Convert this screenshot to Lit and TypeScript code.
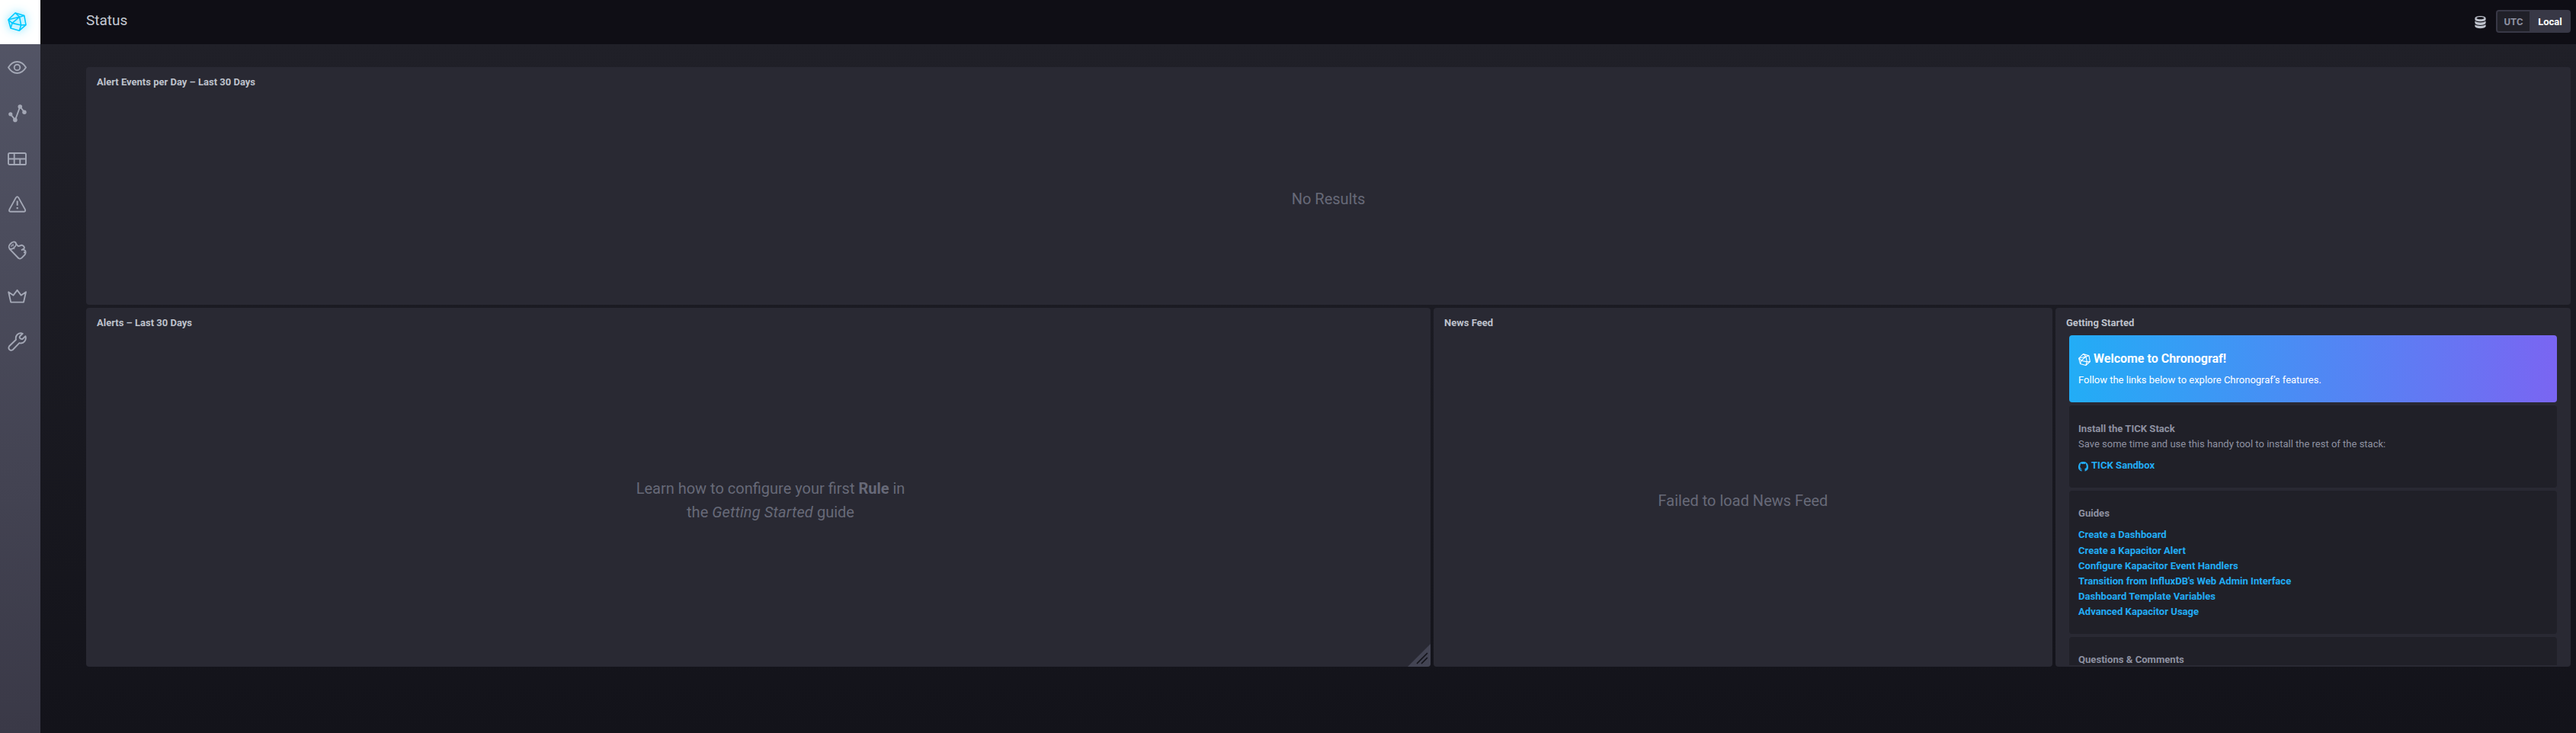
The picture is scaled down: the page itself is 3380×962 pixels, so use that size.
import { LitElement, html, css, svg } from "lit";
import { customElement } from "lit/decorators.js";

const cubo = svg`
  <path d="M10 1 L21.8 4.4 L24 16.6 L15.4 24.2 L4 21 L1 9.8 Z"/>
  <path d="M10 1 L15.6 6.2 L21.8 4.4 M15.6 6.2 L1 9.8 M15.6 6.2 L17.6 17 L24 16.6 M1 9.8 L6 14.4 L15.6 6.2 M6 14.4 L4 21 M6 14.4 L17.6 17 L15.4 24.2"/>`;

const icons = {
  eye: svg`<path d="M1 12.5 C4 7.5 8 5 12.5 5 S21 7.5 24 12.5 C21 17.5 17 20 12.5 20 S4 17.5 1 12.5 Z"/><circle cx="12.5" cy="12.5" r="3.8"/>`,
  graph: svg`<path d="M3.8 13.8 L10 21.4 L16.3 4 L22 11.2"/><g class="dot"><circle cx="3.8" cy="13.8" r="2.6"/><circle cx="9.9" cy="21.4" r="2.8"/><circle cx="16.3" cy="4" r="2.8"/><circle cx="22" cy="11.2" r="2.7"/></g>`,
  dash: svg`<rect x="1" y="5" width="23" height="15" rx="1.6"/><path d="M1 12.5 H24 M8.7 5 V20 M16.3 12.5 V20"/>`,
  alert: svg`<path d="M10.9 3.4 Q12.6 0.8 14.3 3.4 L22.8 18.6 Q24 21.7 21.6 21.8 H3.7 Q1.2 21.7 2.5 18.6 Z"/><path class="mark" d="M12.7 7.6 V13.8 M12.7 15.9 V18.2"/>`,
  log: svg`<path d="M2.2 10.4 L14.4 23 Q16.5 24.4 18.6 22.4 L22.5 18.4 Q24.6 15.5 22.8 12.6 Q20.6 12 20.6 10.8 Q23 9.6 21 7.2 Q18.8 4.8 16.6 6.4 Q13.6 7.8 12.6 5.8 L10 2.2 M18 12.4 L20.6 10.8 M21 15.2 L22.6 15.2"/><ellipse cx="6.4" cy="6.2" rx="5.6" ry="3.5" transform="rotate(-45 6.4 6.2)"/><path d="M4.8 8.2 Q4.4 5.8 8 4.6 M6.5 7.2 L7.8 6 M8 9.7 L9.2 10.8" stroke-width="1.1"/>`,
  crown: svg`<path d="M1.2 7.2 L4.2 20.6 H21 L24 7.2 L17.8 11.6 L12.6 4.8 L7.4 11.6 Z"/>`,
  wrench: svg`<path d="M19.8 1.8 Q16 0.4 12.8 3 Q10 5.8 11 9.8 L2.2 18.2 Q0.6 20.4 2.2 22.6 Q4.4 24.8 6.8 23 L15.4 14.2 Q19.6 15.2 22.2 12.2 Q24.8 9 23.4 5.2 L19.4 9 Q17 9.2 16 7.8 Q15.2 6 16.6 4.8 Z"/>`,
};

const guides = [
  "Create a Dashboard",
  "Create a Kapacitor Alert",
  "Configure Kapacitor Event Handlers",
  "Transition from InfluxDB's Web Admin Interface",
  "Dashboard Template Variables",
  "Advanced Kapacitor Usage",
];

@customElement("app-root")
export class AppRoot extends LitElement {
  static styles = css`
    :host {
      display: flex;
      height: 962px;
      overflow: hidden;
      font-family: Roboto, sans-serif;
      font-size: 13px;
      color: #bec2cc;
      background: #13131a;
    }
    * { box-sizing: border-box; }
    svg { display: block; fill: none; stroke: currentColor; stroke-width: 1.6; stroke-linejoin: round; }
    .nav {
      flex: 0 0 53px;
      display: flex;
      flex-direction: column;
      background: linear-gradient(#545667, #3a3947);
      color: #a4a8b6;
    }
    .logo {
      height: 58px;
      padding: 16px 0 0 10px;
      background: #fff;
      color: #00c9ff;
    }
    .logo svg { filter: drop-shadow(0 0 4px #9beaff) drop-shadow(0 0 7px #b4efff); }
    .item { height: 60px; padding: 18px 0 0 10px; }
    .item svg { stroke-width: 1.9; }
    .item .dot { fill: currentColor; stroke: none; }
    .item .mark { stroke-width: 2.1; }
    .page { flex: 1; display: flex; flex-direction: column; min-width: 0; }
    .head {
      flex: 0 0 58px;
      display: flex;
      align-items: center;
      padding: 0 7px 0 60px;
      background: #0f0e15;
    }
    .title { flex: 1; font-size: 19px; line-height: 24px; padding-bottom: 4px; color: #c6cad3; }
    .db { margin-right: 13px; }
    .db svg { fill: #bec2cc; stroke: none; }
    .toggle {
      display: flex;
      width: 98px;
      height: 30px;
      margin-top: -2px;
      padding: 2px;
      border-radius: 4px;
      background: #383846;
      font-weight: 700;
      line-height: 27px;
      text-align: center;
    }
    .utc { width: 42px; height: 26px; background: #202028; color: #8e91a1; border-radius: 2px 0 0 2px; }
    .local { flex: 1; padding-left: 2px; color: #fff; }
    .body {
      flex: 1;
      padding: 30px 7px 0 60px;
      background: linear-gradient(#202028, #13131a);
    }
    .grid {
      display: grid;
      grid-template-columns: 1764px 812px 676px;
      grid-template-rows: 312px 471px;
      gap: 4px;
    }
    .cell {
      position: relative;
      display: flex;
      flex-direction: column;
      overflow: hidden;
      border-radius: 4px;
      background: #292933;
    }
    .wide { grid-column: 1 / 4; }
    .name { flex: none; height: 36px; padding: 0 14px; line-height: 39px; font-weight: 700; }
    .empty {
      flex: 1;
      display: flex;
      flex-direction: column;
      align-items: center;
      justify-content: center;
      font-size: 20px;
      line-height: 31px;
      color: #676978;
      text-align: center;
    }
    .none { padding-bottom: 2px; }
    .learn { padding: 0 0 2px 32px; }
    .learn i { letter-spacing: 0.15px; }
    .grip { position: absolute; right: 0; bottom: 0; }
    .grip svg { stroke: #13131a; stroke-width: 1.7; stroke-linecap: round; }
    .grip .fill { fill: #434453; stroke: none; }
    .scroll {
      flex: 1;
      min-height: 0;
      display: flex;
      flex-direction: column;
      gap: 4px;
      margin: 0 18px 2px;
      overflow: hidden;
    }
    .card {
      flex: none;
      padding: 0 12px;
      border-radius: 4px;
      background: #202028;
      color: #8e91a1;
      line-height: 20px;
    }
    .hero {
      height: 88px;
      padding-top: 20px;
      color: #fff;
      background: linear-gradient(to right, #22adf6, #7a65f2);
    }
    .hero-title { display: flex; align-items: center; gap: 4px; font-size: 16px; font-weight: 700; line-height: 22px; }
    .hero-title svg { margin-top: 2px; stroke-width: 1.7; }
    .hero-text { padding-top: 7px; }
    .install { height: 108px; padding-top: 21px; }
    .guides { height: 188px; padding-top: 20px; }
    .ask { height: 108px; padding-top: 20px; }
    .h { font-size: 13.1px; font-weight: 700; }
    .link { display: block; color: #22adf6; font-size: 13.1px; font-weight: 700; }
    .sandbox { display: flex; align-items: center; gap: 4px; padding-top: 8px; }
    .sandbox svg { margin-top: 2px; fill: currentColor; stroke: none; }
    .list { padding-top: 8px; }
    .list .link:first-child { padding-bottom: 1px; }
  `;

  icon(name: keyof typeof icons) {
    return html`<div class="item"><svg width="25" height="25" viewBox="0 0 25 25">${icons[name]}</svg></div>`;
  }

  render() {
    return html`
      <nav class="nav">
        <div class="logo"><svg width="25" height="25" viewBox="0 0 25 25">${cubo}</svg></div>
        ${this.icon("eye")}${this.icon("graph")}${this.icon("dash")}${this.icon("alert")}
        ${this.icon("log")}${this.icon("crown")}${this.icon("wrench")}
      </nav>
      <main class="page">
        <header class="head">
          <div class="title">Status</div>
          <div class="db">
            <svg width="15" height="17" viewBox="0 0 15 17">
              <path fill-rule="evenodd" d="M7.5 0 C11.5 0 14.6 1.2 14.6 3 V4.6 Q14.6 7.2 7.5 7.3 Q0.4 7.2 0.4 4.6 V3 C0.4 1.2 3.5 0 7.5 0 Z M7.5 1.2 C4.6 1.2 2.4 1.8 2.4 2.7 S4.6 4.2 7.5 4.2 S12.6 3.6 12.6 2.7 S10.4 1.2 7.5 1.2 Z"/>
              <path d="M0.4 6.6 Q2.5 8.5 7.5 8.5 T14.6 6.6 V9.2 Q13.5 11.8 7.5 11.9 Q1.5 11.8 0.4 9.2 Z"/>
              <path d="M0.4 11.3 Q2.5 13 7.5 13 T14.6 11.3 V13.8 Q13.5 16.2 7.5 16.3 Q1.5 16.2 0.4 13.8 Z"/>
            </svg>
          </div>
          <div class="toggle"><div class="utc">UTC</div><div class="local">Local</div></div>
        </header>
        <div class="body">
          <div class="grid">
            <section class="cell wide">
              <div class="name">Alert Events per Day – Last 30 Days</div>
              <div class="empty none">No Results</div>
            </section>
            <section class="cell">
              <div class="name">Alerts – Last 30 Days</div>
              <div class="empty learn">
                <div>Learn how to configure your first <b>Rule</b> in</div>
                <div>the <i>Getting Started</i> guide</div>
              </div>
              <div class="grip">
                <svg width="30" height="30" viewBox="0 0 30 30">
                  <path class="fill" d="M30 0 V30 H0 Z"/>
                  <path d="M12.5 25.5 L25.5 12.5 M18.5 25.5 L25.5 18.5"/>
                </svg>
              </div>
            </section>
            <section class="cell">
              <div class="name">News Feed</div>
              <div class="empty">Failed to load News Feed</div>
            </section>
            <section class="cell">
              <div class="name">Getting Started</div>
              <div class="scroll">
                <div class="card hero">
                  <div class="hero-title">
                    <svg width="16" height="16" viewBox="0 0 25 25">${cubo}</svg>
                    <span>Welcome to Chronograf!</span>
                  </div>
                  <div class="hero-text">Follow the links below to explore Chronograf’s features.</div>
                </div>
                <div class="card install">
                  <div class="h">Install the TICK Stack</div>
                  <div>Save some time and use this handy tool to install the rest of the stack:</div>
                  <a class="link sandbox">
                    <svg width="13" height="13" viewBox="0 0 16 16"><path d="M8 0 A8 8 0 0 0 5.5 15.6 V12.9 C3.6 13.3 3.1 12.2 2.7 11.3 C4 11.2 4 12 4.8 12 Q5.3 12 5.6 11.4 C3.6 11 2.8 9.4 2.8 7.4 Q2.8 6 3.6 5 Q3.3 4 3.7 2.9 Q4.7 2.8 5.9 3.7 Q8 3.2 10.1 3.7 Q11.3 2.8 12.3 2.9 Q12.7 4 12.4 5 Q13.2 6 13.2 7.4 C13.2 9.6 12.3 11 10.2 11.4 Q10.6 12 10.6 12.8 V15.6 A8 8 0 0 0 8 0 Z"/></svg>
                    <span>TICK Sandbox</span>
                  </a>
                </div>
                <div class="card guides">
                  <div class="h">Guides</div>
                  <div class="list">${guides.map((g) => html`<a class="link">${g}</a>`)}</div>
                </div>
                <div class="card ask"><div class="h">Questions &amp; Comments</div></div>
              </div>
            </section>
          </div>
        </div>
      </main>
    `;
  }
}
